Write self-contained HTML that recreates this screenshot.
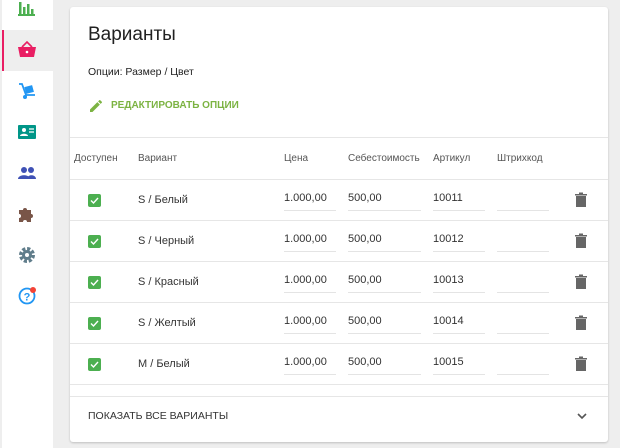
<!DOCTYPE html>
<html><head><meta charset="utf-8"><style>
*{box-sizing:border-box;margin:0;padding:0}
body{width:620px;height:448px;background:#eeeeee;font-family:"Liberation Sans",sans-serif;position:relative;overflow:hidden;color:#212121}
.side{position:absolute;left:2px;top:0;width:51px;height:448px;background:#fff}
.act{position:absolute;left:2px;top:30px;width:51px;height:41px;background:#eeeeee;border-left:2px solid #e91e63}
.ic{position:absolute;left:17px;width:20px;height:20px}
.card{position:absolute;left:70px;top:7px;width:538px;height:435px;background:#fff;border-radius:3px;box-shadow:0 1px 2px rgba(0,0,0,.2)}
.t{position:absolute;white-space:nowrap}
.line{position:absolute;left:0;width:538px;height:1px;background:#e6e6e6}
.h{font-size:10px;color:#555;top:146px}
.r{font-size:11px;color:#333}
.u{position:absolute;height:1px;background:#e4e4e4}
.cb{position:absolute;left:18px;width:13px;height:13px;background:#4caf50;border-radius:2px}
</style></head><body>
<div class="side"></div>
<div class="act"></div>
<svg class="ic" style="top:-1px" viewBox="0 0 20 20"><path d="M2 3h2.5v13H2zM6 8h2.5v8H6zM10 5h2.5v11H10zM14 10h2.5v6H14zM1 15h17v2H1z" fill="#4caf50"/></svg>
<svg class="ic" style="top:40px" viewBox="0 0 20 20"><path d="M1 7h18l-2 10H3z" fill="#e91e63"/><path d="M5 7l5-5 5 5" stroke="#e91e63" stroke-width="1.6" fill="none"/><circle cx="10" cy="12" r="1.3" fill="#fff"/></svg>
<svg class="ic" style="top:81px" viewBox="0 0 20 20"><path d="M2 3h3l4 11h9" stroke="#2196f3" stroke-width="1.8" fill="none"/><rect x="8" y="5" width="8" height="7" fill="#2196f3" transform="rotate(-15 12 8)"/><circle cx="8" cy="16" r="2" fill="#2196f3"/></svg>
<svg class="ic" style="top:122px" viewBox="0 0 20 20"><rect x="1" y="3" width="18" height="14" rx="1" fill="#009688"/><circle cx="7" cy="8" r="2" fill="#fff"/><path d="M3 14c0-3 8-3 8 0z" fill="#fff"/><path d="M12 7h5M12 10h5" stroke="#fff" stroke-width="1.2"/></svg>
<svg class="ic" style="top:163px" viewBox="0 0 20 20"><circle cx="7" cy="7" r="3" fill="#3f51b5"/><circle cx="14" cy="7" r="3" fill="#3f51b5"/><path d="M1 16c0-5 12-5 12 0zM10 16c0-5 9-5 9 0z" fill="#3f51b5"/></svg>
<svg class="ic" style="top:204px" viewBox="0 0 20 20"><path d="M2 6h4a2 2 0 1 1 4 0h4v4a2 2 0 1 1 0 4v4h-4a2 2 0 1 0-4 0H2v-4a2 2 0 1 0 0-4z" fill="#795548"/></svg>
<svg class="ic" style="top:245px" viewBox="0 0 20 20"><circle cx="10" cy="10" r="6" fill="none" stroke="#607d8b" stroke-width="4" stroke-dasharray="3 1.7"/><circle cx="10" cy="10" r="5" fill="#607d8b"/><circle cx="10" cy="10" r="2" fill="#fff"/></svg>
<svg class="ic" style="top:286px" viewBox="0 0 20 20"><circle cx="10" cy="10" r="7.5" fill="none" stroke="#2196f3" stroke-width="1.8"/><text x="10" y="14.5" font-size="11" text-anchor="middle" fill="#2196f3" font-family="Liberation Sans" font-weight="bold">?</text><circle cx="16" cy="4" r="3" fill="#f44336"/></svg>
<div class="card">
<div class="t" style="left:18px;top:17px;font-size:19px">Варианты</div>
<div class="t" style="left:18px;top:59px;font-size:10.5px">Опции: Размер / Цвет</div>
<svg style="position:absolute;left:18px;top:91px" width="16" height="16" viewBox="0 0 24 24"><path d="M3 17.25V21h3.75L17.81 9.94l-3.75-3.75zM20.71 7.04a1 1 0 0 0 0-1.41l-2.34-2.34a1 1 0 0 0-1.41 0l-1.83 1.83 3.75 3.75z" fill="#7cb342"/></svg>
<div class="t" style="left:41px;top:93px;font-size:10px;font-weight:bold;color:#7cb342">РЕДАКТИРОВАТЬ ОПЦИИ</div>
<div class="line" style="top:130px"></div>
<div class="t h" style="left:4px">Доступен</div>
<div class="t h" style="left:68px">Вариант</div>
<div class="t h" style="left:214px">Цена</div>
<div class="t h" style="left:278px">Себестоимость</div>
<div class="t h" style="left:363px">Артикул</div>
<div class="t h" style="left:427px">Штрихкод</div>
<div class="line" style="top:172px"></div>
<div id="rows"></div>
<div class="line" style="top:377px"></div>
<div class="line" style="top:389px"></div>
<div class="t" style="left:18px;top:403px;font-size:10.5px;color:#333">ПОКАЗАТЬ ВСЕ ВАРИАНТЫ</div>
<svg style="position:absolute;left:506px;top:404px" width="12" height="10" viewBox="0 0 12 10"><path d="M2 3l4 4 4-4" stroke="#555" stroke-width="1.6" fill="none"/></svg>
</div>
<script>
var v=["S / Белый","S / Черный","S / Красный","S / Желтый","M / Белый"],a=["10011","10012","10013","10014","10015"],h="";
for(var i=0;i<5;i++){var y=173+i*41;
h+='<div class="cb" style="top:'+(y+14)+'px"><svg width="13" height="13" viewBox="0 0 13 13"><path d="M3 6.5l2.5 2.5 4.5-5" stroke="#fff" stroke-width="1.4" fill="none"/></svg></div>';
h+='<div class="t r" style="left:68px;top:'+(y+14)+'px">'+v[i]+'</div>';
h+='<div class="t r" style="left:214px;top:'+(y+12)+'px">1.000,00</div><div class="t r" style="left:278px;top:'+(y+12)+'px">500,00</div><div class="t r" style="left:363px;top:'+(y+12)+'px">'+a[i]+'</div>';
h+='<div class="u" style="left:214px;width:52px;top:'+(y+30)+'px"></div><div class="u" style="left:278px;width:73px;top:'+(y+30)+'px"></div><div class="u" style="left:363px;width:52px;top:'+(y+30)+'px"></div><div class="u" style="left:427px;width:52px;top:'+(y+30)+'px"></div>';
h+='<svg style="position:absolute;left:504px;top:'+(y+12)+'px" width="14" height="16" viewBox="0 0 14 16"><path d="M2 4h10v11H2zM1 2h12v1.5H1zM5 0.5h4v2H5z" fill="#666"/></svg>';
if(i<4)h+='<div class="line" style="top:'+(y+40)+'px"></div>';}
document.getElementById("rows").innerHTML=h;
</script>
</body></html>
